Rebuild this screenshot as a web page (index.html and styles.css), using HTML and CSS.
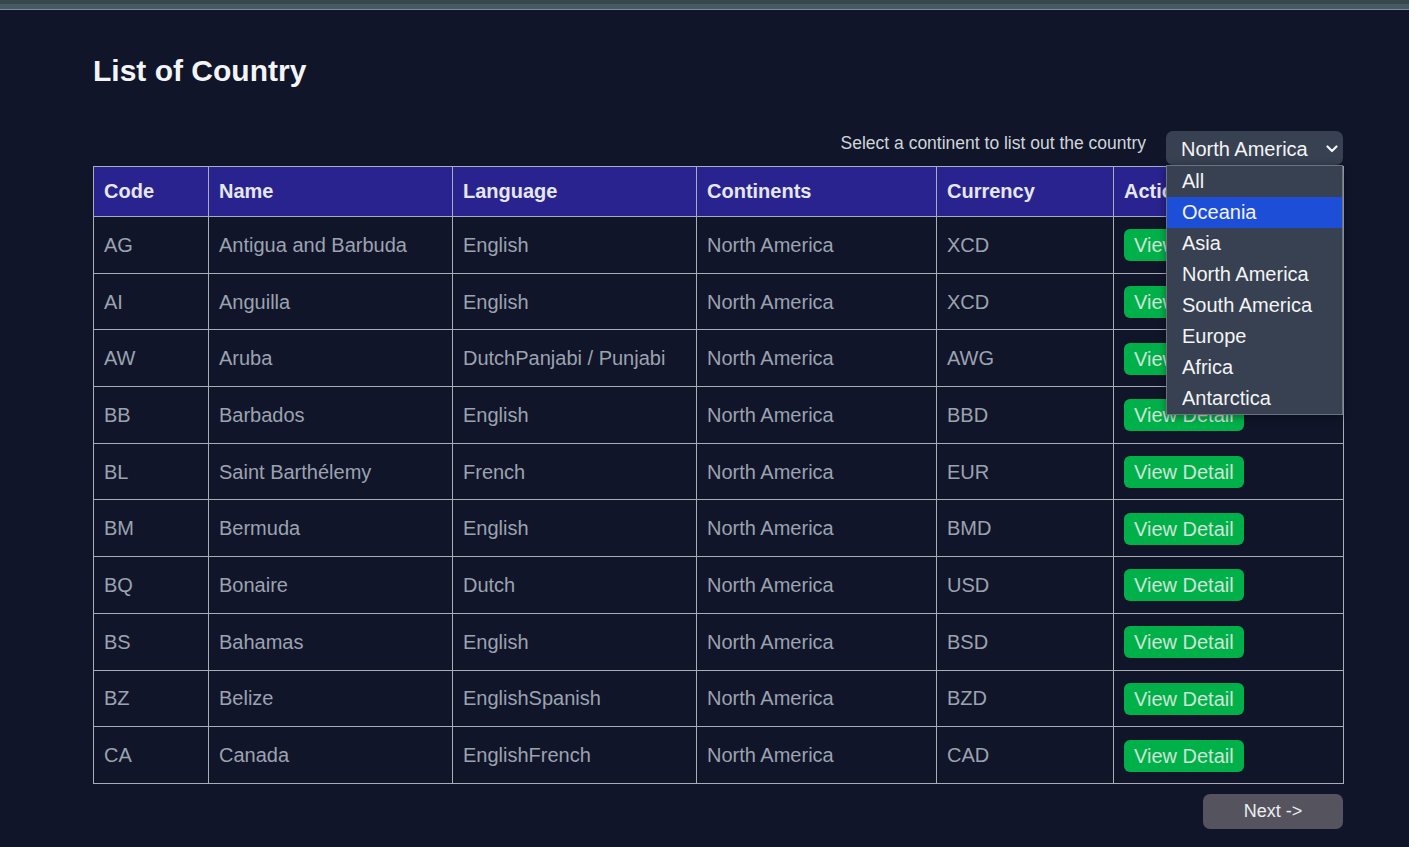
FILE: index.html
```html
<!DOCTYPE html>
<html lang="en">
<head>
<meta charset="utf-8">
<title>List of Country</title>
<link rel="stylesheet" href="styles.css">
</head>
<body>
<div class="topbar"></div>
<main class="page">
  <h1 class="title">List of Country</h1>
  <div class="filter">
    <label class="filter-label">Select a continent to list out the country</label>
    <div class="select-wrap">
      <div class="select">
        <span>North America</span>
        <svg class="chev" width="12" height="8" viewBox="0 0 12 8"><path d="M1.5 1.5 L6 6 L10.5 1.5" fill="none" stroke="#f3f4f6" stroke-width="2.2" stroke-linecap="round" stroke-linejoin="round"/></svg>
      </div>
      <ul class="options">
        <li>All</li>
        <li class="active">Oceania</li>
        <li>Asia</li>
        <li>North America</li>
        <li>South America</li>
        <li>Europe</li>
        <li>Africa</li>
        <li>Antarctica</li>
      </ul>
    </div>
  </div>
  <table class="tbl">
    <colgroup>
      <col class="c1"><col class="c2"><col class="c3"><col class="c4"><col class="c5"><col class="c6">
    </colgroup>
    <thead>
      <tr><th>Code</th><th>Name</th><th>Language</th><th>Continents</th><th>Currency</th><th>Action</th></tr>
    </thead>
    <tbody>
      <tr><td>AG</td><td>Antigua and Barbuda</td><td>English</td><td>North America</td><td>XCD</td><td><button class="btn">View Detail</button></td></tr>
      <tr><td>AI</td><td>Anguilla</td><td>English</td><td>North America</td><td>XCD</td><td><button class="btn">View Detail</button></td></tr>
      <tr><td>AW</td><td>Aruba</td><td>DutchPanjabi / Punjabi</td><td>North America</td><td>AWG</td><td><button class="btn">View Detail</button></td></tr>
      <tr><td>BB</td><td>Barbados</td><td>English</td><td>North America</td><td>BBD</td><td><button class="btn">View Detail</button></td></tr>
      <tr><td>BL</td><td>Saint Barthélemy</td><td>French</td><td>North America</td><td>EUR</td><td><button class="btn">View Detail</button></td></tr>
      <tr><td>BM</td><td>Bermuda</td><td>English</td><td>North America</td><td>BMD</td><td><button class="btn">View Detail</button></td></tr>
      <tr><td>BQ</td><td>Bonaire</td><td>Dutch</td><td>North America</td><td>USD</td><td><button class="btn">View Detail</button></td></tr>
      <tr><td>BS</td><td>Bahamas</td><td>English</td><td>North America</td><td>BSD</td><td><button class="btn">View Detail</button></td></tr>
      <tr><td>BZ</td><td>Belize</td><td>EnglishSpanish</td><td>North America</td><td>BZD</td><td><button class="btn">View Detail</button></td></tr>
      <tr><td>CA</td><td>Canada</td><td>EnglishFrench</td><td>North America</td><td>CAD</td><td><button class="btn">View Detail</button></td></tr>
    </tbody>
  </table>
  <div class="pager">
    <button class="next">Next -&gt;</button>
  </div>
</main>
</body>
</html>
```
FILE: styles.css
```css
* { box-sizing: border-box; }
html, body {
  margin: 0;
  background: #10152a;
  font-family: "Liberation Sans", Arial, sans-serif;
  color: #e5e7eb;
}
.topbar {
  height: 11px;
  background: linear-gradient(#37474b 0, #37474b 4px, #455a64 4px, #455a64 9px, #7d8e94 9px, #7d8e94 10px, #10152a 10px);
}
.page {
  width: 1250px;
  margin-left: 93px;
}
.title {
  margin: 42px 0 0;
  font-size: 30px;
  line-height: 36px;
  font-weight: bold;
  color: #f3f4f6;
}
.filter {
  margin-top: 42px;
  display: flex;
  justify-content: flex-end;
  align-items: flex-start;
  gap: 20px;
  height: 35px;
}
.filter-label {
  font-size: 17.5px;
  line-height: 24px;
  color: #d1d5db;
}
.select-wrap {
  position: relative;
  width: 177px;
}
.select {
  height: 34px;
  background: #374151;
  border-radius: 7px;
  display: flex;
  align-items: center;
  justify-content: space-between;
  padding: 0 5px 0 15px;
  font-size: 20px;
  color: #f3f4f6;
}
.select span { padding-top: 2px; }
.chev { margin-top: 2px; }
.options {
  position: absolute;
  left: 0;
  top: 34px;
  width: 177px;
  margin: 0;
  padding: 0;
  list-style: none;
  background: #374151;
  border: 1px solid #6b7280;
  box-shadow: 0 2px 8px rgba(0,0,0,0.4);
  z-index: 5;
}
.options li {
  height: 31px;
  line-height: 31px;
  padding-left: 15px;
  font-size: 20px;
  color: #f3f4f6;
}
.options li.active { background: #1d4ed8; }
.tbl {
  width: 1250px;
  border-collapse: collapse;
  table-layout: fixed;
  border: 1px solid #a8adb6;
}
.c1 { width: 115px; }
.c2 { width: 244px; }
.c3 { width: 244px; }
.c4 { width: 240px; }
.c5 { width: 177px; }
.c6 { width: 230px; }
.tbl th, .tbl td {
  border: 1px solid #a8adb6;
  text-align: left;
  padding: 0 10px;
  font-size: 20px;
  white-space: nowrap;
  overflow: hidden;
}
.tbl th {
  background: #29238f;
  color: #e5e7eb;
  font-weight: bold;
  height: 50px;
}
.tbl td {
  color: #9ca3af;
  height: 56.7px;
  padding-top: 1px;
}
.btn {
  font-family: inherit;
  font-size: 20px;
  line-height: 28px;
  padding: 2px 10px;
  border: 0;
  border-radius: 6px;
  background: #00b14a;
  color: #cfe3d6;
}
.pager {
  display: flex;
  justify-content: flex-end;
  margin-top: 10px;
}
.next {
  width: 140px;
  height: 35px;
  border: 0;
  border-radius: 7px;
  background: #55545e;
  color: #eceef2;
  font-family: inherit;
  font-size: 18px;
}
```
